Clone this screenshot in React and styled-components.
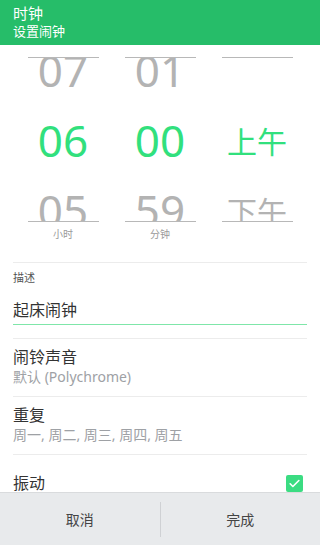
import React from 'react'
import styled, { createGlobalStyle } from 'styled-components'

const GlobalStyle = createGlobalStyle`
  html, body {
    margin: 0;
    padding: 0;
    background: #fff;
  }
  body {
    font-family: "Noto Sans", "Noto Sans CJK SC", sans-serif;
  }
`

const columns = [
  { key: 'hour', items: ['07', '06', '05'], label: '小时' },
  { key: 'minute', items: ['01', '00', '59'], label: '分钟' },
  { key: 'ampm', items: ['', '上午', '下午'], label: '', small: true },
]

const settings = [
  { title: '闹铃声音', value: '默认 (Polychrome)' },
  { title: '重复', value: '周一, 周二, 周三, 周四, 周五' },
]

function App() {
  return (
    <>
      <GlobalStyle />
      <Screen>
        <Header>
          <Title>时钟</Title>
          <Subtitle>设置闹钟</Subtitle>
        </Header>
        <Content>
          <Pickers>
            {columns.map(col => (
              <PickerColumn key={col.key}>
                <Wheel>
                  {col.items.map((item, i) => (
                    <WheelItem key={i} active={i === 1} small={col.small}>
                      {item}
                    </WheelItem>
                  ))}
                </Wheel>
                <WheelLabel>{col.label}</WheelLabel>
              </PickerColumn>
            ))}
          </Pickers>
          <Form>
            <Divider />
            <FieldLabel>描述</FieldLabel>
            <TextField>起床闹钟</TextField>
            <Divider spaced />
            {settings.map(s => (
              <React.Fragment key={s.title}>
                <SettingRow>
                  <SettingTitle>{s.title}</SettingTitle>
                  <SettingValue>{s.value}</SettingValue>
                </SettingRow>
                <Divider />
              </React.Fragment>
            ))}
            <ToggleRow>
              <SettingTitle>振动</SettingTitle>
              <Checkbox>
                <svg width="13" height="13" viewBox="0 0 24 24" fill="none">
                  <path
                    d="M4 12.5l5 5L20 6.5"
                    stroke="#fff"
                    strokeWidth="3"
                    strokeLinecap="round"
                    strokeLinejoin="round"
                  />
                </svg>
              </Checkbox>
            </ToggleRow>
          </Form>
        </Content>
        <Footer>
          <FooterButton>取消</FooterButton>
          <FooterButton>完成</FooterButton>
        </Footer>
      </Screen>
    </>
  )
}

const Screen = styled.div`
  display: flex;
  flex-direction: column;
  width: 320px;
  height: 545px;
  overflow: hidden;
`

const Header = styled.header`
  flex: 0 0 45px;
  box-sizing: border-box;
  background: #26bd69;
  color: #fff;
  padding: 4px 13px 0;
`

const Title = styled.div`
  font-size: 15px;
  line-height: 18px;
`

const Subtitle = styled.div`
  font-size: 13px;
  line-height: 18px;
`

const Content = styled.main`
  flex: 1;
  overflow: hidden;
`

const Pickers = styled.div`
  display: flex;
  justify-content: center;
  gap: 26px;
  padding-top: 12px;
`

const PickerColumn = styled.div`
  width: 71px;
  display: flex;
  flex-direction: column;
  align-items: center;
`

const Wheel = styled.div`
  width: 100%;
  height: 163px;
  border-top: 1px solid #b8b8b8;
  border-bottom: 1px solid #b8b8b8;
  overflow: hidden;
`

const WheelItem = styled.div`
  height: 70px;
  display: flex;
  align-items: center;
  justify-content: center;
  font-size: ${p => (p.small ? '30px' : '44px')};
  color: ${p => (p.active ? '#31e07d' : '#b3b3b3')};
  &:first-child {
    margin-top: -23px;
  }
`

const WheelLabel = styled.div`
  margin-top: 6px;
  height: 12px;
  font-size: 10px;
  line-height: 12px;
  color: #9a9a9a;
`

const Form = styled.section`
  padding: 22px 13px 0;
`

const Divider = styled.div`
  height: 1px;
  background: #ececec;
  margin-top: ${p => (p.spaced ? '13px' : '0')};
`

const FieldLabel = styled.div`
  padding-top: 7px;
  font-size: 11px;
  line-height: 16px;
  color: #555;
`

const TextField = styled.div`
  margin-top: 12px;
  padding-bottom: 2px;
  font-size: 16px;
  line-height: 24px;
  color: #333;
  border-bottom: 1px solid #7fe6a9;
`

const SettingRow = styled.div`
  padding: 8px 0 9px;
`

const SettingTitle = styled.div`
  font-size: 16px;
  line-height: 20px;
  color: #333;
`

const SettingValue = styled.div`
  font-size: 14px;
  line-height: 20px;
  color: #9ea1a5;
`

const ToggleRow = styled.div`
  display: flex;
  align-items: center;
  justify-content: space-between;
  padding: 18px 4px 18px 0;
`

const Checkbox = styled.span`
  width: 17px;
  height: 17px;
  border-radius: 2px;
  background: #3bdc82;
  display: flex;
  align-items: center;
  justify-content: center;
`

const Footer = styled.footer`
  flex: 0 0 53px;
  box-sizing: border-box;
  display: flex;
  align-items: center;
  background: #e8eaec;
  border-top: 1px solid #d9dbdd;
`

const FooterButton = styled.button`
  flex: 1;
  height: 35px;
  border: none;
  background: transparent;
  font-family: inherit;
  font-size: 14px;
  color: #444;
  padding: 0;
  & + & {
    border-left: 1px solid #cfd1d4;
  }
`

export default App
